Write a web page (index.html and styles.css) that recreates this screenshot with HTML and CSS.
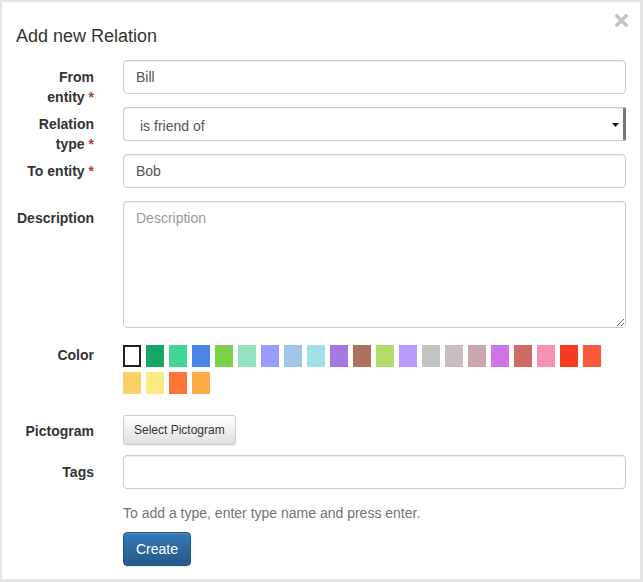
FILE: index.html
```html
<!DOCTYPE html>
<html>
<head>
<meta charset="utf-8">
<link rel="stylesheet" href="styles.css">
</head>
<body>
<div class="panel">
  <button class="close" aria-label="Close">
    <svg width="13" height="13" viewBox="0 0 13 13"><path d="M2 2 L11 11 M11 2 L2 11" stroke="#c4c4c4" stroke-width="3.4" stroke-linecap="square"/></svg>
  </button>
  <h4 class="title">Add new Relation</h4>
  <form class="form">
    <div class="row">
      <label class="lbl">From entity&nbsp;<span class="req">*</span></label>
      <input class="ctl" type="text" value="Bill">
    </div>
    <div class="row">
      <label class="lbl">Relation type&nbsp;<span class="req">*</span></label>
      <div class="select-wrap">
        <select class="ctl sel"><option>is friend of</option></select>
        <span class="caret"><svg width="7" height="4" viewBox="0 0 7 4"><path d="M0 0 H7 L3.5 4 Z" fill="#111"/></svg></span>
      </div>
    </div>
    <div class="row">
      <label class="lbl">To entity&nbsp;<span class="req">*</span></label>
      <input class="ctl" type="text" value="Bob">
    </div>
    <div class="row">
      <label class="lbl">Description</label>
      <textarea class="ctl area" placeholder="Description"></textarea>
    </div>
    <div class="row row-color">
      <label class="lbl lbl-color">Color</label>
      <div class="swatches">
        <span class="sw sw-white"></span>
        <span class="sw" style="background:#16a765"></span>
        <span class="sw" style="background:#42d692"></span>
        <span class="sw" style="background:#4986e7"></span>
        <span class="sw" style="background:#7bd148"></span>
        <span class="sw" style="background:#92e1c0"></span>
        <span class="sw" style="background:#9a9cff"></span>
        <span class="sw" style="background:#9fc6e7"></span>
        <span class="sw" style="background:#9fe1e7"></span>
        <span class="sw" style="background:#a47ae2"></span>
        <span class="sw" style="background:#ac725e"></span>
        <span class="sw" style="background:#b3dc6c"></span>
        <span class="sw" style="background:#b99aff"></span>
        <span class="sw" style="background:#c2c2c2"></span>
        <span class="sw" style="background:#cabdbf"></span>
        <span class="sw" style="background:#cca6ac"></span>
        <span class="sw" style="background:#cd74e6"></span>
        <span class="sw" style="background:#d06b64"></span>
        <span class="sw" style="background:#f691b2"></span>
        <span class="sw" style="background:#f83a22"></span>
        <span class="sw" style="background:#fa573c"></span>
        <span class="sw" style="background:#fad165"></span>
        <span class="sw" style="background:#fbe983"></span>
        <span class="sw" style="background:#ff7537"></span>
        <span class="sw" style="background:#ffad46"></span>
      </div>
    </div>
    <div class="row row-picto">
      <label class="lbl lbl-picto">Pictogram</label>
      <div><button type="button" class="btn-default">Select Pictogram</button></div>
    </div>
    <div class="row row-tags">
      <label class="lbl">Tags</label>
      <input class="ctl" type="text">
    </div>
    <div class="row row-help">
      <span></span>
      <div>
        <p class="help">To add a type, enter type name and press enter.</p>
        <button type="button" class="btn-primary">Create</button>
      </div>
    </div>
  </form>
</div>
</body>
</html>
```

FILE: styles.css
```css
html, body {
  margin: 0;
  padding: 0;
}
body {
  background: #e5e5e5;
  font-family: "Liberation Sans", Arial, sans-serif;
  font-size: 14px;
  color: #333;
}
.panel {
  position: relative;
  background: #fff;
  margin: 2px 3px 0 2px;
  height: 577px;
  box-sizing: border-box;
  padding: 24px 14px 0 14px;
}
.close {
  position: absolute;
  top: 12px;
  right: 12px;
  padding: 0;
  border: 0;
  background: none;
  line-height: 0;
}
.title {
  margin: 0 0 14px 0;
  font-size: 18px;
  font-weight: normal;
  line-height: 20px;
  color: #333;
}
.row {
  display: grid;
  grid-template-columns: 78px 1fr;
  column-gap: 29px;
  margin: 0 0 13px 0;
}
.lbl {
  font-weight: bold;
  text-align: right;
  line-height: 20px;
  padding-top: 7px;
  height: 34px;
  box-sizing: border-box;
}
.req {
  color: #b03a37;
}
.ctl {
  display: block;
  width: 100%;
  height: 34px;
  box-sizing: border-box;
  border: 1px solid #ccc;
  border-radius: 4px;
  box-shadow: inset 0 1px 1px rgba(0,0,0,.075);
  padding: 6px 12px;
  font-family: "Liberation Sans", Arial, sans-serif;
  font-size: 14px;
  line-height: 20px;
  color: #555;
  background: #fff;
  margin: 0;
}
.select-wrap {
  position: relative;
}
.sel {
  appearance: none;
  -webkit-appearance: none;
  padding: 8px 12px 4px 16px;
  border-right: 3px solid #777;
  border-top-right-radius: 2px;
  border-bottom-right-radius: 2px;
}
.caret {
  position: absolute;
  right: 7px;
  top: 15px;
  line-height: 0;
}
.area {
  height: 127px;
  resize: vertical;
}
.area::placeholder {
  color: #999;
}
.row-color {
  margin-bottom: 21px;
}
.lbl-color {
  padding-top: 4px;
}
.swatches {
  display: flex;
  flex-wrap: wrap;
  padding-top: 4px;
  margin-bottom: -5px;
}
.sw {
  width: 18px;
  height: 22px;
  margin: 0 5px 5px 0;
  box-sizing: border-box;
}
.sw-white {
  background: #fff;
  border: 2px solid #222;
}
.row-picto {
  margin-bottom: 6px;
}
.lbl-picto {
  padding-top: 6px;
}
.btn-default {
  display: block;
  height: 30px;
  padding: 5px 10px;
  font-family: "Liberation Sans", Arial, sans-serif;
  font-size: 12px;
  line-height: 18px;
  color: #333;
  border: 1px solid #ccc;
  border-radius: 3px;
  background: linear-gradient(#fff, #e0e0e0);
  box-shadow: inset 0 1px 0 rgba(255,255,255,.15), 0 1px 1px rgba(0,0,0,.075);
}
.row-tags {
  margin-bottom: 0;
}
.help {
  margin: 14px 0 9px;
  color: #737373;
  line-height: 20px;
}
.btn-primary {
  display: block;
  height: 34px;
  padding: 6px 12px;
  font-family: "Liberation Sans", Arial, sans-serif;
  font-size: 14px;
  line-height: 20px;
  color: #fff;
  border: 1px solid #245580;
  border-radius: 4px;
  background: linear-gradient(#337ab7, #265a88);
  box-shadow: inset 0 1px 0 rgba(255,255,255,.15), 0 1px 1px rgba(0,0,0,.075);
}
```
